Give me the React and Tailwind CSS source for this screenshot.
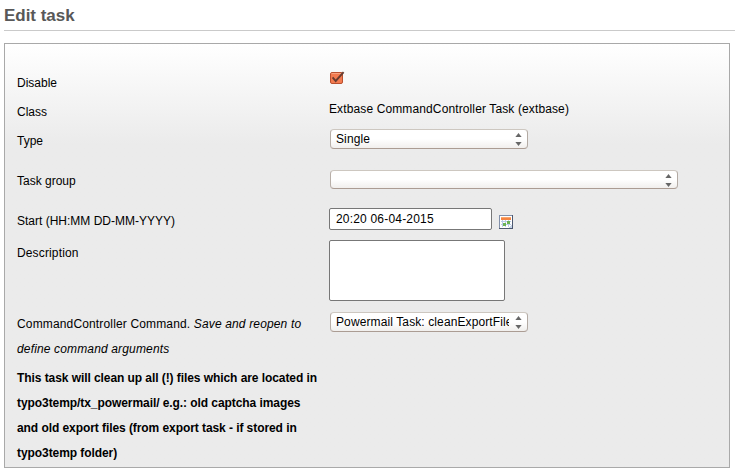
import React from 'react';

function Row({ label, height, children }) {
  return (
    <div className={`flex items-start ${height}`}>
      <div className="w-[312px] shrink-0 pr-2.5">{label}</div>
      <div className="-mt-px flex items-start">{children}</div>
    </div>
  );
}

function SpinArrows() {
  return (
    <svg className="shrink-0" width="7" height="16" viewBox="0 0 7 16" fill="#666" aria-hidden="true">
      <path d="M3.5 2 6.6 5.9H.4z" />
      <path d="M.4 11.1h6.2L3.5 15z" />
    </svg>
  );
}

function Select({ value = '', size }) {
  return (
    <button
      type="button"
      className={`ml-px flex items-center justify-between rounded-[4px] border border-t-[#cdc7c0] border-r-[#b3aaa3] border-b-[#ab9c93] border-l-[#b8afa8] bg-linear-to-b from-white from-50% to-[#f1efed] pr-[5px] pl-[5px] text-left tracking-[0.11px] ${size}`}
    >
      <span className="w-[173px] overflow-hidden whitespace-nowrap leading-[18px]">{value}</span>
      <SpinArrows />
    </button>
  );
}

function Checkbox() {
  return (
    <svg className="mt-[1px] ml-px" width="15" height="14" viewBox="0 0 15 14" role="img" aria-label="Disabled">
      <rect x=".5" y="1.5" width="12" height="11" rx="1.5" fill="#f37b50" stroke="#b9502f" />
      <path d="M1.5 2.5h10" stroke="#f9a27f" />
      <path d="M2.6 6.4 5.7 10 13.6 1.2" fill="none" stroke="#673c30" strokeWidth="1.9" />
    </svg>
  );
}

function CalendarIcon() {
  return (
    <svg className="mt-[7px] ml-[7px]" width="14" height="14" viewBox="0 0 14 14" shapeRendering="crispEdges" role="img" aria-label="Pick a date">
      <path fill="#8290aa" d="M0 0h14v14H0z" />
      <path fill="#4d5870" d="M13 0h1v14H0v-1h13z" />
      <path fill="#fff" d="M1 1h12v12H1z" />
      <path fill="#f58443" d="M2 2h10v3H2z" />
      <path fill="#f9a76c" d="M2 2h10v1H2z" />
      <path fill="#b9cde8" d="M2 6h10v1H2zM2 9h10v1H2zM3 5h1v7H3zM6 5h1v7H6zM9 5h1v7H9z" />
      <path fill="#6bb356" d="M8 6h3v3H8zM4 8h3v3H4z" />
      <path fill="#c6d3e6" d="M10 12h3v1h-3zM11 11h2v1h-2zM12 10h1v1h-1z" />
    </svg>
  );
}

export default function App() {
  return (
    <main className="h-[473px] w-[735px] overflow-hidden bg-white pl-1 font-['Liberation_Sans',Arial,sans-serif] text-[12px] leading-[25px] text-black">
      <h1 className="h-[31px] border-b border-[#cacaca] pt-[5px] text-[17px] leading-[21px] font-bold tracking-[-0.03px] text-[#585858]">
        Edit task
      </h1>
      <form className="mt-3 h-[425px] w-[726px] border border-[#a9a9a9] bg-[#ebebeb] bg-linear-to-b from-white to-[#ebebeb] to-[100px] pt-[27px] pl-3">
        <Row label="Disable" height="h-[29px]">
          <Checkbox />
        </Row>
        <Row label="Class" height="h-[29px]">
          <span className="-mt-[2px] tracking-[0.12px]">Extbase CommandController Task (extbase)</span>
        </Row>
        <Row label="Type" height="h-10">
          <Select value="Single" size="mt-px h-5 w-[198px]" />
        </Row>
        <Row label="Task group" height="h-10">
          <Select size="mt-0.5 h-[19px] w-[348px]" />
        </Row>
        <Row label="Start (HH:MM DD-MM-YYYY)" height="h-8">
          <input
            className="h-[22px] w-[163px] rounded-[2px] border border-[#777] bg-white px-1.5 leading-5 tracking-[0.19px]"
            defaultValue="20:20 06-04-2015"
          />
          <CalendarIcon />
        </Row>
        <Row label={<span className="tracking-[0.14px]">Description</span>} height="h-[71px]">
          <textarea className="block h-[61px] w-[176px] resize-none rounded-[2px] border border-[#777] bg-white" />
        </Row>
        <Row
          label={
            <span className="tracking-[0.15px]">
              CommandController Command. <em>Save and reopen to define command arguments</em>
            </span>
          }
          height="h-[54px]"
        >
          <Select value="Powermail Task: cleanExportFiles" size="mt-px h-5 w-[198px]" />
        </Row>
        <p className="w-[302px] font-bold tracking-[-0.07px]">
          This task will clean up all (!) files which are located in typo3temp/tx_powermail/ e.g.: old captcha images
          and old export files (from export task - if stored in typo3temp folder)
        </p>
      </form>
    </main>
  );
}
